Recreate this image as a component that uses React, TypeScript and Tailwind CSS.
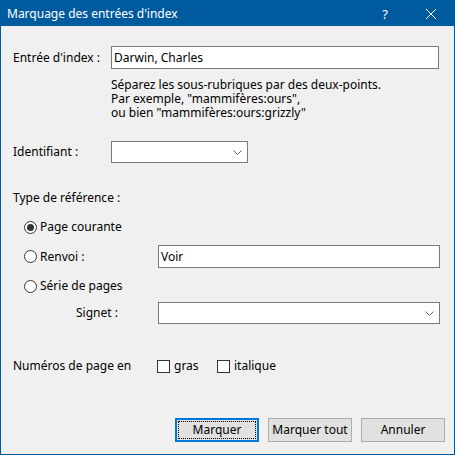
import React from "react";

function Chevron() {
  return (
    <svg width="9" height="5" viewBox="0 0 9 5" className="shrink-0">
      <path d="M0.5 0.5 L4.5 4.5 L8.5 0.5" fill="none" stroke="#606060" strokeWidth="1" />
    </svg>
  );
}

function Radio({ checked }: { checked?: boolean }) {
  return (
    <span className="w-[13px] h-[13px] rounded-full border border-[#333333] bg-white flex items-center justify-center shrink-0">
      {checked && <span className="w-[7px] h-[7px] rounded-full bg-[#333333]" />}
    </span>
  );
}

function Checkbox() {
  return <span className="w-[13px] h-[13px] border border-[#333333] bg-white shrink-0" />;
}

export default function App() {
  return (
    <div
      className="w-[455px] h-[455px] bg-[#005a9e] p-px flex flex-col text-[12px] leading-[14px] text-black"
      style={{ fontFamily: '"Segoe UI", "Noto Sans", sans-serif' }}
    >
      {/* barre de titre */}
      <div className="h-[25px] flex items-center text-white pl-[6px] shrink-0">
        <span className="flex-1">Marquage des entrées d'index</span>
        <span className="w-[46px] text-center text-[13px]">?</span>
        <span className="w-[46px] flex justify-center">
          <svg width="10" height="10" viewBox="0 0 10 10">
            <path d="M0 0 L10 10 M10 0 L0 10" stroke="white" strokeWidth="1" />
          </svg>
        </span>
      </div>

      <div className="flex-1 bg-[#f0f0f0] flex flex-col pl-[12px]">
        <div className="mt-[20px] flex items-center">
          <span className="w-[98px]">Entrée d'index :</span>
          <div className="w-[328px] h-[23px] bg-white border border-[#7a7a7a] flex items-center pl-[2px]">
            Darwin, Charles
          </div>
        </div>

        <div className="mt-[9px] ml-[98px]">
          <div>Séparez les sous-rubriques par des deux-points.</div>
          <div>Par exemple, "mammifères:ours",</div>
          <div>ou bien "mammifères:ours:grizzly"</div>
        </div>

        <div className="mt-[21px] flex items-center">
          <span className="w-[98px]">Identifiant :</span>
          <div className="w-[137px] h-[22px] bg-white border border-[#7a7a7a] flex items-center justify-end pr-[5px]">
            <Chevron />
          </div>
        </div>

        <div className="mt-[28px] h-[14px] flex items-center">Type de référence :</div>

        <div className="mt-[15px] h-[14px] flex items-center gap-[3px] ml-[11px]">
          <Radio checked />
          <span>Page courante</span>
        </div>

        <div className="mt-[11px] flex items-center">
          <div className="w-[145px] flex items-center gap-[3px] pl-[11px]">
            <Radio />
            <span>Renvoi :</span>
          </div>
          <div className="w-[282px] h-[23px] bg-white border border-[#7a7a7a] flex items-center pl-[2px]">
            Voir
          </div>
        </div>

        <div className="mt-[11px] h-[14px] flex items-center gap-[3px] ml-[11px]">
          <Radio />
          <span>Série de pages</span>
        </div>

        <div className="mt-[9px] flex items-center">
          <span className="w-[145px] pl-[63px]">Signet :</span>
          <div className="w-[282px] h-[22px] bg-white border border-[#7a7a7a] flex items-center justify-end pr-[5px]">
            <Chevron />
          </div>
        </div>

        <div className="mt-[35px] h-[14px] flex items-center">
          <span className="w-[144px]">Numéros de page en</span>
          <div className="flex items-center gap-[4px] w-[60px]">
            <Checkbox />
            <span>gras</span>
          </div>
          <div className="flex items-center gap-[4px]">
            <Checkbox />
            <span>italique</span>
          </div>
        </div>

        <div className="mt-[45px] flex justify-end gap-[9px] pr-[9px]">
          <button className="w-[84px] h-[24px] bg-[#e1e1e1] border-2 border-[#0078d7] p-px">
            <span className="w-full h-full border border-dotted border-black flex items-center justify-center">
              Marquer
            </span>
          </button>
          <button className="w-[84px] h-[24px] bg-[#e1e1e1] border border-[#adadad] flex items-center justify-center">
            Marquer tout
          </button>
          <button className="w-[84px] h-[24px] bg-[#e1e1e1] border border-[#adadad] flex items-center justify-center">
            Annuler
          </button>
        </div>
      </div>
    </div>
  );
}
